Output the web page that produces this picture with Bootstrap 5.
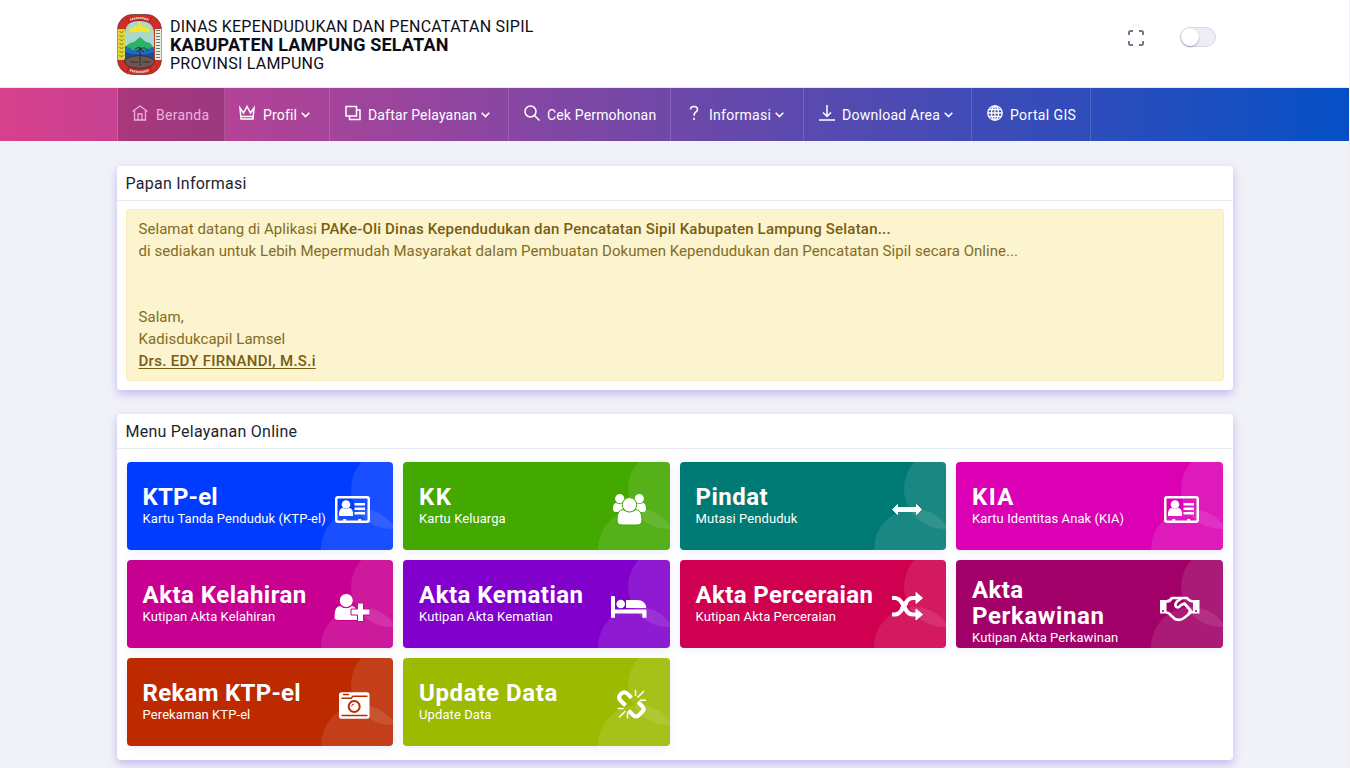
<!DOCTYPE html>
<html lang="id">
<head>
<meta charset="utf-8">
<meta name="viewport" content="width=device-width, initial-scale=1">
<title>Disdukcapil Lampung Selatan</title>
<link href="https://cdn.jsdelivr.net/npm/bootstrap@5.3.0/dist/css/bootstrap.min.css" rel="stylesheet">
<style>
html{background:#f1f2f8;overflow:hidden}
body{font-family:Roboto,"Noto Sans",sans-serif;background:#f1f2f8;color:#14172b;border-right:1px solid #f0f0f4;overflow:hidden;height:768px}
.page-wrap{width:1116px;margin-left:117px}
.top-bar{height:88px;border-bottom:1px solid #e9e7f3}
.brand-logo{margin-top:-2px}
.brand-text{font-size:16px;line-height:18px;color:#0d0d17;margin-left:8px;padding-top:2px;white-space:nowrap;letter-spacing:.24px}
.brand-text b{font-size:18px;font-weight:700;letter-spacing:.17px}
.full-icon{margin:13px 35px 0 0}
.switch-pill{width:36px;height:20px;border:1px solid #d6d8e2;background:#ededf8;border-radius:10px;margin:11px 17px 0 0}
.switch-pill i{width:18px;height:18px;border-radius:50%;background:#fff;box-shadow:0 1px 2px rgba(60,60,90,.4)}
.main-nav{height:53px;background:linear-gradient(90deg,#d8408c 0,#0550c6 100%)}
.main-nav ul{border-left:1px solid rgba(255,255,255,.15)}
.main-nav li{border-right:1px solid rgba(255,255,255,.15);font-size:14px;font-weight:400;letter-spacing:.16px;color:#fff;padding-left:15px;white-space:nowrap}
.main-nav li.current{background:rgba(0,0,0,.14);color:#ecb3da}
.main-nav svg.ico{width:16px;height:16px;margin:-3px 7px 0 0;flex:none}
.main-nav li:first-child svg.ico,.main-nav li:nth-child(2) svg.ico{margin-left:-1px;margin-right:8px}
.main-nav svg.arr{width:9px;height:6px;margin-left:4px;flex:none}
.main-nav li>span{padding-top:2px}
.w1{width:107px}.w2{width:105px}.w3{width:179px}.w4{width:162px}.w5{width:133px}.w6{width:168px}.w7{width:119px}
.panel{border:0;border-radius:4px;margin-top:25px;box-shadow:0 4px 10px rgba(120,95,225,.38)}
.panel+.panel{margin-top:24px}
.panel-title{height:35px;line-height:36px;padding-left:8.5px;font-size:16px;letter-spacing:.25px;border-bottom:1px solid #e9ebf2;color:#1c1f30}
.notice{margin:8px 9px 9px;height:172px;padding:8px 11.5px;background:#fcf3cf;border:1px solid #f8ebb8;border-radius:3px;font-size:15px;line-height:22px;letter-spacing:.05px;color:#836c24;white-space:nowrap}
.notice b{font-weight:500;letter-spacing:.2px;color:#765e13}
.notice b.sign{letter-spacing:.29px}
.notice u{text-underline-offset:2px}
.tiles{--bs-gutter-x:10px;--bs-gutter-y:10px;padding:3px 5.4px 14px 4.6px;margin:0}
.tile{height:88px;border-radius:4px;color:#fff;padding:0 24px 2px 16px;box-shadow:0 2px 8px rgba(110,130,220,.13)}
.tile.tall{padding-top:14px;padding-bottom:0}
.tile:before,.tile:after{content:"";position:absolute;width:80px;height:80px;border-radius:50%;background:rgba(255,255,255,.1)}
.tile:before{right:-38px;top:-13px}
.tile:after{right:-8px;bottom:-39px}
.tile h3{font-size:24px;line-height:26px;font-weight:700;margin:0}
.tile p{font-size:13px;line-height:17px;margin:0;white-space:nowrap;letter-spacing:.08px}
.tile svg{position:absolute;z-index:1;right:23px;top:29px;width:40px;height:38px}
.tile .txt{z-index:1}
.ls-1{letter-spacing:.14px}.ls-2{letter-spacing:.27px}.ls-3{letter-spacing:.37px}.ls-4{letter-spacing:.48px}.ls-5{letter-spacing:.6px}.ls-6{letter-spacing:1.3px}
.bg-ktp{background:#003cff}.bg-kk{background:#43a800}.bg-pindat{background:#007a74}.bg-kia{background:#dc00b4}.bg-lahir{background:#c80092}
.bg-mati{background:#8200cc}.bg-cerai{background:#cf0050}.bg-kawin{background:#a10068}.bg-rekam{background:#bd2a00}.bg-update{background:#9cba00}
</style>
</head>
<body>
<header class="top-bar bg-white">
  <div class="page-wrap d-flex pt-3">
    <svg class="brand-logo" width="45" height="61" viewBox="0 0 45 61">
      <rect x=".5" y=".5" width="44" height="60" rx="15" fill="#cf2d25" stroke="#6b3a35" stroke-width=".8"/>
      <path d="M.5 15h7.500v31H.5z" fill="#e3d632"/><path d="M38 15h6.500v31H38z" fill="#e6efe4"/>
      <path d="M8 20Q8 7 22.500 7T37 20v25H8z" fill="#a9d8cf"/>
      <path d="M8 33l5-4 4-1 6-5 6 5 4 1 4 5v8H8z" fill="#2bb169"/>
      <path d="M8 32q4 1 7 4 8-1 14 0 4-3 8-3v12H8z" fill="#1d6dbb"/>
      <path d="M8 38q15 5 29 0v8H8z" fill="#174f98"/>
      <path d="M7 46q15-9 31 0-2 9-15.500 9T7 46z" fill="#6d5753" stroke="#2c1f22" stroke-width=".6"/>
      <path d="M13 19v-6l3 2 1-4 3 2 2.500-6L25 13l3-2 1 4 3-2v6q-9-3-19 0z" fill="#f3e82e"/>
      <path d="M23 33v19M18 35q5-3 5 0 5-3 8 2M20 38l3-4 4 4" stroke="#22303a" stroke-width="1" fill="none"/>
      <path d="M2.500 17l2 2 2-2M2.500 21l2 2 2-2M2.500 25l2 2 2-2M2.500 29l2 2 2-2M2.500 33l2 2 2-2M2.500 37l2 2 2-2M2.500 41l2 2 2-2" stroke="#7d7a2c" fill="none"/>
      <path d="M41 16v29" stroke="#5e7d6c" stroke-width="4" stroke-dasharray="1 2"/>
      <path d="M10 3l3 5q9-4 19 0l3-5M10 58l3-6q9 4 19 0l3 6" fill="none" stroke="#8a1d1a" stroke-width=".7"/>
      <path d="M13 6q9-4 19 0M13 56q9 4 19 0" stroke="#f2d3ca" stroke-width="2.200" fill="none" stroke-dasharray="1.400 .7"/>
      <path d="M13 48h8M26 48h7" stroke="#34292c"/>
    </svg>
    <div class="brand-text flex-grow-1">
      <div>DINAS KEPENDUDUKAN DAN PENCATATAN SIPIL</div>
      <div><b>KABUPATEN LAMPUNG SELATAN</b></div>
      <div>PROVINSI LAMPUNG</div>
    </div>
    <svg class="full-icon" width="18" height="18" viewBox="0 0 18 18" fill="none" stroke="#74788d" stroke-width="2"><path d="M2 6V3.500Q2 2 3.500 2H6M12 2h2.500Q16 2 16 3.500V6M16 12v2.500q0 1.500-1.500 1.500H12M6 16H3.500Q2 16 2 14.500V12"/></svg>
    <div class="switch-pill d-flex"><i></i></div>
  </div>
</header>
<nav class="main-nav">
  <ul class="page-wrap list-unstyled d-flex h-100 mb-0">
    <li class="current w1 d-flex align-items-center"><svg class="ico" viewBox="0 0 16 16" fill="none" stroke="currentColor" stroke-width="1.300"><path d="M.5 6.500L8 1l7.500 5.500M2.500 5.500V15h11V5.500M6 15V9h4v6"/></svg><span class="ls-2">Beranda</span></li>
    <li class="w2 d-flex align-items-center"><svg class="ico" viewBox="0 0 16 16" fill="none" stroke="currentColor" stroke-width="1.500"><path d="M1 3l1 11h12l1-11-3.500 5L8 1.500 4.500 8zM2 11.500h12"/></svg><span>Profil</span><svg class="arr" viewBox="0 0 9 6" fill="none" stroke="#fff" stroke-width="1.600"><path d="M.7.8l3.800 3.800L8.300.8"/></svg></li>
    <li class="w3 d-flex align-items-center"><svg class="ico" viewBox="0 0 16 16" fill="none" stroke="currentColor" stroke-width="1.500"><path d="M1 1.500h10.500V11H1zM4.500 11v3.500H15V5h-3.500"/></svg><span>Daftar Pelayanan</span><svg class="arr" viewBox="0 0 9 6" fill="none" stroke="#fff" stroke-width="1.600"><path d="M.7.8l3.800 3.800L8.300.8"/></svg></li>
    <li class="w4 d-flex align-items-center"><svg class="ico" viewBox="0 0 16 16" fill="none" stroke="currentColor" stroke-width="1.500"><circle cx="6.500" cy="6.500" r="5.500"/><path d="M10.500 10.500l5 5"/></svg><span>Cek Permohonan</span></li>
    <li class="w5 d-flex align-items-center"><svg class="ico" viewBox="0 0 16 16" fill="none" stroke="currentColor" stroke-width="1.600"><path d="M4.500 4.500Q4.500 1.500 8 1.500t3.500 3Q11.500 6 9.800 7 8 8 8 10.800M8 12.800V15"/></svg><span class="ls-2">Informasi</span><svg class="arr" viewBox="0 0 9 6" fill="none" stroke="#fff" stroke-width="1.600"><path d="M.7.8l3.800 3.800L8.300.8"/></svg></li>
    <li class="w6 d-flex align-items-center"><svg class="ico" viewBox="0 0 16 16" fill="none" stroke="currentColor" stroke-width="1.500"><path d="M8 0v11M4 7.500l4 4 4-4M0 15h16"/></svg><span class="ls-2">Download Area</span><svg class="arr" viewBox="0 0 9 6" fill="none" stroke="#fff" stroke-width="1.600"><path d="M.7.8l3.800 3.800L8.300.8"/></svg></li>
    <li class="w7 d-flex align-items-center"><svg class="ico" viewBox="0 0 16 16" fill="none" stroke="currentColor" stroke-width="1.300"><circle cx="8" cy="8" r="7.200"/><ellipse cx="8" cy="8" rx="3.500" ry="7.200"/><path d="M8 1v14M1 8h14M2 4.500h12M2 11.500h12"/></svg><span class="ls-3">Portal GIS</span></li>
  </ul>
</nav>
<main class="page-wrap">
  <section class="card panel">
    <div class="panel-title">Papan Informasi</div>
    <div class="notice">
      Selamat datang di Aplikasi <b>PAKe-Oli Dinas Kependudukan dan Pencatatan Sipil Kabupaten Lampung Selatan...</b><br>
      di sediakan untuk Lebih Mepermudah Masyarakat dalam Pembuatan Dokumen Kependudukan dan Pencatatan Sipil secara Online...<br><br><br>
      Salam,<br>Kadisdukcapil Lamsel<br><b class="sign"><u>Drs. EDY FIRNANDI, M.S.i</u></b>
    </div>
  </section>
  <section class="card panel">
    <div class="panel-title">Menu Pelayanan Online</div>
    <div class="row tiles">
      <div class="col-3"><div class="tile bg-ktp position-relative overflow-hidden d-flex align-items-center"><div class="txt"><h3 class="ls-1">KTP-el</h3><p>Kartu Tanda Penduduk (KTP-el)</p></div>
        <svg viewBox="0 0 40 38" fill="#fff"><path fill-rule="evenodd" d="M8 5h29q3 0 3 3v21q0 3-3 3H8q-3 0-3-3V8q0-3 3-3zm-.5 3v20.800q0 .7.700.700h5V28h3v1.500h12V28h3v1.500h5.600q.7 0 .7-.7V8q0-.500-.5-.500H8q-.5 0-.500.500z"/><circle cx="16" cy="13.500" r="4.300"/><path d="M9 25q-.5-8 4-8 3 2 6 0 4.500 0 4 8z"/><path d="M24.500 12H35v2.400H24.500zM24.500 16.500H35v2.400H24.500zM24.500 21H35v2.400H24.500z"/></svg></div></div>
      <div class="col-3"><div class="tile bg-kk position-relative overflow-hidden d-flex align-items-center"><div class="txt"><h3 class="ls-6">KK</h3><p>Kartu Keluarga</p></div>
        <svg viewBox="0 0 40 38" fill="#fff" stroke="#43a800"><g stroke-width="0"><circle cx="12.700" cy="7.700" r="4.600"/><circle cx="32.300" cy="7.700" r="4.600"/><path d="M6 18q0-6 3-6 3.500 2 7 0v9H9q-3 0-3-3zM39 18q0-6-3-6-3.500 2-7 0v9h7q3 0 3-3z"/></g><path d="M10 29q0-10 6-10.500 6.500 4.500 13 0 6 .500 6 10.500 0 5-5 5H15q-5 0-5-5z"/><circle cx="22.500" cy="13.800" r="7.200"/></svg></div></div>
      <div class="col-3"><div class="tile bg-pindat position-relative overflow-hidden d-flex align-items-center"><div class="txt"><h3 class="ls-4">Pindat</h3><p>Mutasi Penduduk</p></div>
        <svg viewBox="0 0 40 38" fill="#fff" stroke="#fff" stroke-width="1" stroke-linejoin="round"><path d="M9.500 18.500l5-5v3h19v-3l5 5-5 5v-3h-19v3z"/></svg></div></div>
      <div class="col-3"><div class="tile bg-kia position-relative overflow-hidden d-flex align-items-center"><div class="txt"><h3 class="ls-6">KIA</h3><p class="ls-1">Kartu Identitas Anak (KIA)</p></div>
        <svg viewBox="0 0 40 38" fill="#fff"><path fill-rule="evenodd" d="M7 5h29q3 0 3 3v21q0 3-3 3H7q-3 0-3-3V8q0-3 3-3zm-.5 3v20.800q0 .7.700.700h5V28h3v1.500h12V28h3v1.500h5.600q.7 0 .7-.7V8q0-.500-.5-.500H7q-.5 0-.500.500z"/><circle cx="15" cy="13.500" r="4.300"/><path d="M8 25q-.5-8 4-8 3 2 6 0 4.500 0 4 8z"/><path d="M23.500 12H34v2.400H23.500zM23.500 16.500H34v2.400H23.500zM23.500 21H34v2.400H23.500z"/></svg></div></div>
      <div class="col-3"><div class="tile bg-lahir position-relative overflow-hidden d-flex align-items-center"><div class="txt"><h3 class="ls-4">Akta Kelahiran</h3><p>Kutipan Akta Kelahiran</p></div>
        <svg viewBox="0 0 40 38" fill="#fff" stroke="#c80092" stroke-width="1"><path d="M4 28q0-11 6-11.500 6 4.500 12 0 5 .500 6 10v5H9q-5 0-5-3.500z"/><circle cx="16.300" cy="11.500" r="7"/><path d="M27.500 14h6v6h6.500v6h-6.500v6.500h-6V26H21v-6h6.500z"/></svg></div></div>
      <div class="col-3"><div class="tile bg-mati position-relative overflow-hidden d-flex align-items-center"><div class="txt"><h3 class="ls-4">Akta Kematian</h3><p>Kutipan Akta Kematian</p></div>
        <svg viewBox="0 0 40 38" fill="#fff"><path d="M4 8q0-1 1-1h2q1 0 1 1v12.500h31.500v8.200h-4.200v-4.200H8v4.200H4zM19 11h11q8.500 0 9.300 8H19z"/><circle cx="13.700" cy="15" r="4.300"/></svg></div></div>
      <div class="col-3"><div class="tile bg-cerai position-relative overflow-hidden d-flex align-items-center"><div class="txt"><h3 class="ls-3">Akta Perceraian</h3><p>Kutipan Akta Perceraian</p></div>
        <svg viewBox="0 0 40 38"><path d="M9 9h3q4 0 7 5l4 7q2.500 4.500 7 4.500h4M9 25.500h3q4 0 7-5l4-7Q25.500 9 30 9h4" fill="none" stroke="#fff" stroke-width="4.200"/><path d="M19 20.500l4-7" stroke="#fff" stroke-width="5"/><path d="M33 3.500L39.500 9 33 14.500zM33 20l6.500 5.500L33 31z" fill="#fff" stroke="#fff" stroke-linejoin="round"/></svg></div></div>
      <div class="col-3"><div class="tile tall bg-kawin position-relative overflow-hidden d-flex align-items-center"><div class="txt"><h3><span class="ls-3">Akta</span><br><span class="ls-5">Perkawinan</span></h3><p>Kutipan Akta Perkawinan</p></div>
        <svg viewBox="0 0 40 38"><path d="M0 11h6.500v13.500H0zM33 11h6.500v13.500H33z" fill="#fff"/><path d="M6 12.500q4 0 6-3.500h15q2.500 3.500 7 3.500M6 23.500q3 0 5 3l4 3.500q5 2 9-1l5-4q1-2 4.500-2M22 9l-5 3.500q-3 4-.500 5.500 2.500 1 4.500-2l3.500-1.500 6 7-2 3.500" fill="none" stroke="#fff" stroke-width="2.700" stroke-linejoin="round"/><circle cx="3" cy="22" r="1" fill="#a10068"/><circle cx="36" cy="22" r="1" fill="#a10068"/></svg></div></div>
      <div class="col-3"><div class="tile bg-rekam position-relative overflow-hidden d-flex align-items-center"><div class="txt"><h3 class="ls-2">Rekam KTP-el</h3><p class="ls-1">Perekaman KTP-el</p></div>
        <svg viewBox="0 0 40 38"><rect x="9" y="5.300" width="30.500" height="26.500" rx="2.500" fill="#fff"/><path d="M13 7.500h6M11.500 11.300H21l2-2h14.500M11.500 28.500h26" stroke="#bd2a00" stroke-width="1.600" fill="none"/><circle cx="24.200" cy="19.500" r="5.500" fill="#fff" stroke="#bd2a00" stroke-width="2"/><path d="M21.700 19.500q0-2.500 2.500-2.500" fill="none" stroke="#bd2a00"/></svg></div></div>
      <div class="col-3"><div class="tile bg-update position-relative overflow-hidden d-flex align-items-center"><div class="txt"><h3 class="ls-5">Update Data</h3><p class="ls-1">Update Data</p></div>
        <svg viewBox="0 0 40 38" fill="none" stroke="#fff"><path d="M18.500 18.500l-5-5q-3-3 0-6l.800-.8q3-3 6 0l4.200 4.200M21.500 23.500l4.500 4.500q3 3 6 0l3.500-3.500q2.500-2.500 0-5l-4.500-4.500" stroke-width="4"/><path d="M28.500 3v6M30.500 10.500l6.500-6.500M33 13.300h6M10.500 21.500h6M12 30.500l6.500-6.500M20.500 25.500v6" stroke-width="1.500"/></svg></div></div>
    </div>
  </section>
</main>
<script src="https://cdn.jsdelivr.net/npm/bootstrap@5.3.0/dist/js/bootstrap.bundle.min.js"></script>
</body>
</html>
